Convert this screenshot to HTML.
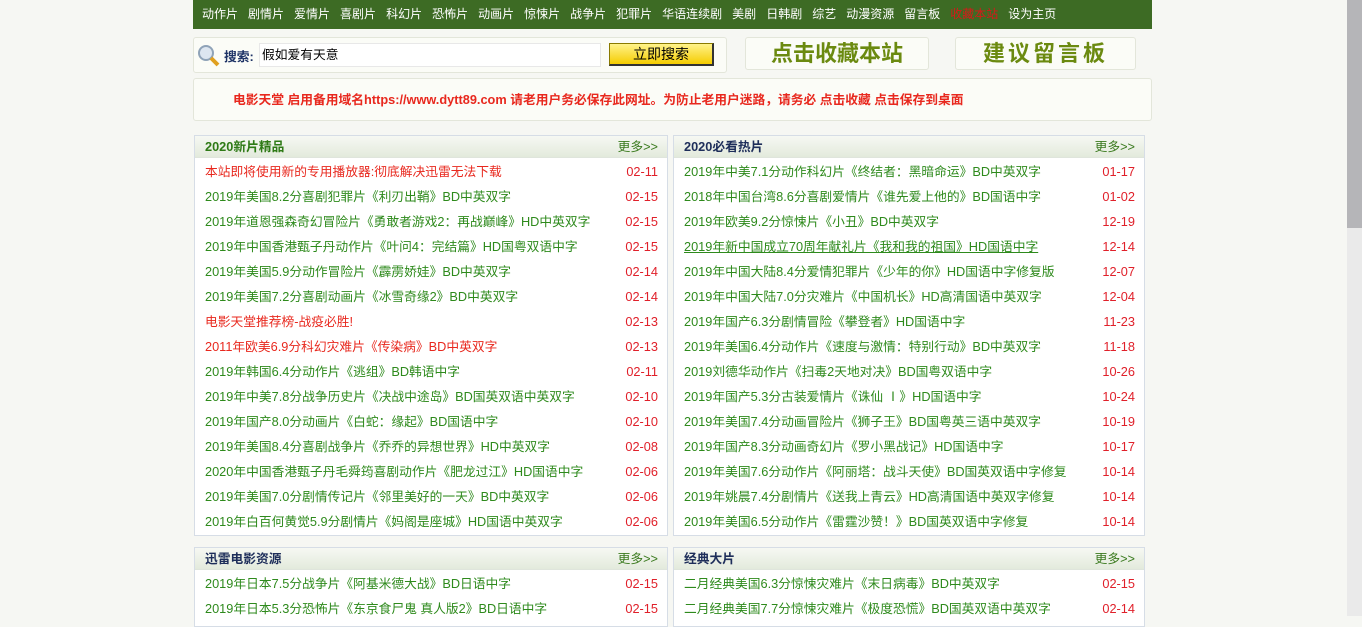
<!DOCTYPE html>
<html><head><meta charset="utf-8">
<style>
*{margin:0;padding:0;box-sizing:border-box}
body{width:1362px;height:616px;overflow:hidden;background:#f6f7f3;font-family:"Liberation Sans","Noto Sans CJK SC",sans-serif;font-size:12.75px;position:relative}
.a{position:absolute}
#nav{left:193px;top:0;width:959px;height:29px;background:#3d6b24;color:#fff;font-size:12px;line-height:29px;padding-left:9px;white-space:nowrap}
#nav span{margin-right:10px}
.box{background:#fbfcf7;border:1px solid #e3e6da;border-radius:3px}
.panel{background:#fff;border:1px solid #d6dde6}
.ph{height:22px;background:linear-gradient(#f6f8f3,#e3eadc);border-bottom:1px solid #dfe5dc;line-height:22px;padding-left:10px;font-weight:bold;font-size:12.75px}
.more{position:absolute;right:9px;top:0;font-weight:normal;color:#3a7a1e}
.row{position:relative;height:25px;line-height:25px;padding-left:10px;color:#2e8a1c;white-space:nowrap}
.row b{font-weight:normal;position:absolute;right:9px;top:0;color:#e0202a}
.r{color:#e8281e}
#sb{left:1347px;top:0;width:15px;height:616px;background:#eaeaea}
#th{left:1347px;top:0;width:15px;height:228px;background:#b5b5b8}
</style></head><body>
<div id="nav" class="a"><span>动作片</span><span>剧情片</span><span>爱情片</span><span>喜剧片</span><span>科幻片</span><span>恐怖片</span><span>动画片</span><span>惊悚片</span><span>战争片</span><span>犯罪片</span><span>华语连续剧</span><span>美剧</span><span>日韩剧</span><span>综艺</span><span>动漫资源</span><span>留言板</span><span style="color:#d81818">收藏本站</span><span>设为主页</span></div>
<div class="a box" style="left:193px;top:37px;width:534px;height:36px"></div>
<svg class="a" style="left:196px;top:43px" width="24" height="24"><circle cx="10" cy="10" r="7" fill="#dde6f0" stroke="#8fa3b8" stroke-width="2"/><line x1="15" y1="15" x2="22" y2="22" stroke="#e0a020" stroke-width="4"/></svg>
<div class="a" style="left:224px;top:46px;font-weight:bold;color:#1e3366">搜索:</div>
<div class="a" style="left:259px;top:43px;width:342px;height:24px;background:#fff;border:1px solid #e8e8e8;line-height:22px;padding-left:2px">假如爱有天意</div>
<div class="a" style="left:609px;top:43px;width:105px;height:23px;background:linear-gradient(#fff38a,#f5cc00);border:1px solid #8a7a00;border-right:2px solid #333;border-bottom:2px solid #333;text-align:center;line-height:21px;font-size:14px">立即搜索</div>
<div class="a box" style="left:745px;top:37px;width:184px;height:33px;text-align:center;line-height:32px;font-size:22px;color:#6b8a10;font-weight:bold">点击收藏本站</div>
<div class="a box" style="left:955px;top:37px;width:181px;height:33px;text-align:center;line-height:32px;font-size:22px;color:#6b8a10;font-weight:bold;letter-spacing:3px">建议留言板</div>
<div class="a box" style="left:193px;top:78px;width:959px;height:43px;padding-left:39px;line-height:42px;color:#e8281e;font-weight:bold;font-size:12.75px">电影天堂 启用备用域名https://www.dytt89.com 请老用户务必保存此网址。为防止老用户迷路，请务必 点击收藏 点击保存到桌面</div>

<div class="a panel" style="left:194px;top:135px;width:474px;height:401px">
<div class="ph" style="color:#2e7a16">2020新片精品<span class="more">更多&gt;&gt;</span></div>
<div style="padding-top:1px">
<div class="row r">本站即将使用新的专用播放器:彻底解决迅雷无法下载<b>02-11</b></div>
<div class="row">2019年美国8.2分喜剧犯罪片《利刃出鞘》BD中英双字<b>02-15</b></div>
<div class="row">2019年道恩强森奇幻冒险片《勇敢者游戏2：再战巅峰》HD中英双字<b>02-15</b></div>
<div class="row">2019年中国香港甄子丹动作片《叶问4：完结篇》HD国粤双语中字<b>02-15</b></div>
<div class="row">2019年美国5.9分动作冒险片《霹雳娇娃》BD中英双字<b>02-14</b></div>
<div class="row">2019年美国7.2分喜剧动画片《冰雪奇缘2》BD中英双字<b>02-14</b></div>
<div class="row r">电影天堂推荐榜-战疫必胜!<b>02-13</b></div>
<div class="row r">2011年欧美6.9分科幻灾难片《传染病》BD中英双字<b>02-13</b></div>
<div class="row">2019年韩国6.4分动作片《逃组》BD韩语中字<b>02-11</b></div>
<div class="row">2019年中美7.8分战争历史片《决战中途岛》BD国英双语中英双字<b>02-10</b></div>
<div class="row">2019年国产8.0分动画片《白蛇：缘起》BD国语中字<b>02-10</b></div>
<div class="row">2019年美国8.4分喜剧战争片《乔乔的异想世界》HD中英双字<b>02-08</b></div>
<div class="row">2020年中国香港甄子丹毛舜筠喜剧动作片《肥龙过江》HD国语中字<b>02-06</b></div>
<div class="row">2019年美国7.0分剧情传记片《邻里美好的一天》BD中英双字<b>02-06</b></div>
<div class="row">2019年白百何黄觉5.9分剧情片《妈阁是座城》HD国语中英双字<b>02-06</b></div>
</div></div>

<div class="a panel" style="left:673px;top:135px;width:472px;height:401px">
<div class="ph" style="color:#1e2e5a">2020必看热片<span class="more">更多&gt;&gt;</span></div>
<div style="padding-top:1px">
<div class="row">2019年中美7.1分动作科幻片《终结者：黑暗命运》BD中英双字<b>01-17</b></div>
<div class="row">2018年中国台湾8.6分喜剧爱情片《谁先爱上他的》BD国语中字<b>01-02</b></div>
<div class="row">2019年欧美9.2分惊悚片《小丑》BD中英双字<b>12-19</b></div>
<div class="row" style="text-decoration:underline">2019年新中国成立70周年献礼片《我和我的祖国》HD国语中字<b>12-14</b></div>
<div class="row">2019年中国大陆8.4分爱情犯罪片《少年的你》HD国语中字修复版<b>12-07</b></div>
<div class="row">2019年中国大陆7.0分灾难片《中国机长》HD高清国语中英双字<b>12-04</b></div>
<div class="row">2019年国产6.3分剧情冒险《攀登者》HD国语中字<b>11-23</b></div>
<div class="row">2019年美国6.4分动作片《速度与激情：特别行动》BD中英双字<b>11-18</b></div>
<div class="row">2019刘德华动作片《扫毒2天地对决》BD国粤双语中字<b>10-26</b></div>
<div class="row">2019年国产5.3分古装爱情片《诛仙 Ⅰ》HD国语中字<b>10-24</b></div>
<div class="row">2019年美国7.4分动画冒险片《狮子王》BD国粤英三语中英双字<b>10-19</b></div>
<div class="row">2019年国产8.3分动画奇幻片《罗小黑战记》HD国语中字<b>10-17</b></div>
<div class="row">2019年美国7.6分动作片《阿丽塔：战斗天使》BD国英双语中字修复<b>10-14</b></div>
<div class="row">2019年姚晨7.4分剧情片《送我上青云》HD高清国语中英双字修复<b>10-14</b></div>
<div class="row">2019年美国6.5分动作片《雷霆沙赞！》BD国英双语中字修复<b>10-14</b></div>
</div></div>

<div class="a panel" style="left:194px;top:547px;width:474px;height:80px">
<div class="ph" style="color:#1e2e5a">迅雷电影资源<span class="more">更多&gt;&gt;</span></div>
<div style="padding-top:1px">
<div class="row">2019年日本7.5分战争片《阿基米德大战》BD日语中字<b>02-15</b></div>
<div class="row">2019年日本5.3分恐怖片《东京食尸鬼 真人版2》BD日语中字<b>02-15</b></div>
</div></div>
<div class="a panel" style="left:673px;top:547px;width:472px;height:80px">
<div class="ph" style="color:#1e2e5a">经典大片<span class="more">更多&gt;&gt;</span></div>
<div style="padding-top:1px">
<div class="row">二月经典美国6.3分惊悚灾难片《末日病毒》BD中英双字<b>02-15</b></div>
<div class="row">二月经典美国7.7分惊悚灾难片《极度恐慌》BD国英双语中英双字<b>02-14</b></div>
</div></div>

<div id="sb" class="a"></div><div id="th" class="a"></div>
</body></html>
